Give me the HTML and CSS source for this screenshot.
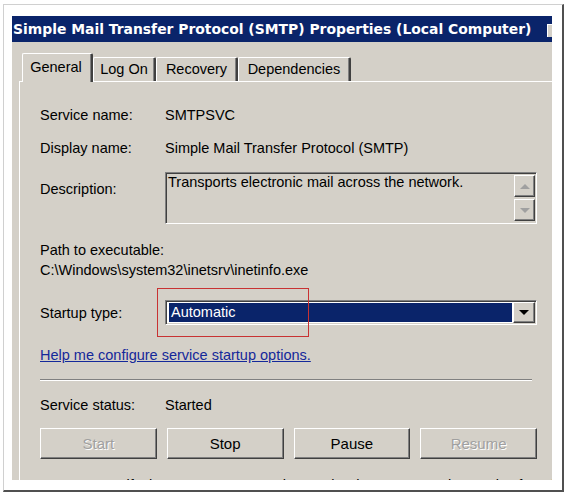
FILE: index.html
```html
<!DOCTYPE html>
<html>
<head>
<meta charset="utf-8">
<link rel="stylesheet" href="styles.css">
</head>
<body>
<div class="frame">
  <div class="dialog">
    <div class="titlebar">
      <span class="title">Simple Mail Transfer Protocol (SMTP) Properties (Local Computer)</span>
      <span class="closefrag"></span>
    </div>
    <div class="tabs">
      <div class="tab sel">General</div>
      <div class="tab t-logon">Log On</div>
      <div class="tab t-rec">Recovery</div>
      <div class="tab t-dep">Dependencies</div>
    </div>
    <div class="panel">
      <div class="row r-svc"><span class="lbl">Service name:</span><span>SMTPSVC</span></div>
      <div class="row r-disp"><span class="lbl">Display name:</span><span>Simple Mail Transfer Protocol (SMTP)</span></div>
      <div class="row r-desc">
        <span class="lbl desc-lbl">Description:</span>
        <div class="descbox">
          <div class="desctext">Transports electronic mail across the network.</div>
          <div class="vscroll">
            <div class="sbtn"><span class="tri up"></span></div>
            <div class="sbtn"><span class="tri down"></span></div>
          </div>
        </div>
      </div>
      <div class="path-lbl">Path to executable:</div>
      <div class="path">C:\Windows\system32\inetsrv\inetinfo.exe</div>
      <div class="row r-start">
        <span class="lbl">Startup type:</span>
        <div class="combo">
          <div class="combosel">Automatic</div>
          <div class="combobtn"><span class="tri down black"></span></div>
        </div>
        <div class="redbox"></div>
      </div>
      <a class="link" href="#">Help me configure service startup options.</a>
      <div class="sep"></div>
      <div class="row r-status"><span class="lbl">Service status:</span><span>Started</span></div>
      <div class="buttons">
        <div class="btn dis">Start</div>
        <div class="btn">Stop</div>
        <div class="btn">Pause</div>
        <div class="btn dis">Resume</div>
      </div>
      <div class="cut">You can specify the start parameters that apply when you start the service from here.</div>
    </div>
  </div>
</div>
</body>
</html>
```

FILE: styles.css
```css
html, body {
  margin: 0;
  padding: 0;
  background: #ffffff;
}
body {
  width: 565px;
  height: 493px;
  overflow: hidden;
}
.frame {
  margin: 4px 0 0 3px;
  box-sizing: border-box;
  width: 561px;
  height: 488px;
  border-top: 1px solid #d0d0d0;
  border-left: 1px solid #d0d0d0;
  border-right: 2px solid #505050;
  border-bottom: 2px solid #505050;
  padding: 11px 10px 10px 8px;
}
.dialog {
  width: 540px;
  height: 464px;
  background: #d4d0c8;
  overflow: hidden;
  display: flex;
  flex-direction: column;
  font-family: "Liberation Sans", Arial, sans-serif;
  font-size: 14.5px;
  color: #000;
  position: relative;
}
.titlebar {
  height: 26px;
  background: #0a246a;
  color: #fff;
  display: flex;
  align-items: center;
  flex-shrink: 0;
  overflow: hidden;
}
.title {
  font-family: "DejaVu Sans", Verdana, sans-serif;
  font-weight: bold;
  font-size: 13.9px;
  white-space: nowrap;
  padding-left: 1px;
}
.closefrag {
  margin-left: auto;
  flex-shrink: 0;
  width: 4px;
  height: 12px;
  background: #d4d0c8;
  border-top: 1px solid #fff;
  border-left: 1px solid #fff;
  margin-top: 2px;
}
.tabs {
  display: flex;
  align-items: flex-end;
  padding: 11px 0 0 10px;
  height: 28px;
  flex-shrink: 0;
  position: relative;
  z-index: 1;
}
.tab {
  box-sizing: border-box;
  height: 24px;
  border-top: 1px solid #fff;
  border-left: 1px solid #fff;
  border-right: 2px solid #404040;
  border-radius: 2px 2px 0 0;
  line-height: 22px;
  text-align: center;
  white-space: nowrap;
  box-shadow: inset -1px 0 0 #808080;
}
.tab.sel {
  height: 29px;
  width: 71px;
  margin-bottom: -1px;
  background: #d4d0c8;
  line-height: 26px;
  padding-right: 2px;
}
.t-logon { width: 63px; }
.t-rec { width: 82px; }
.t-dep { width: 113px; }
.panel {
  margin-left: 7px;
  border-left: 1px solid #fff;
  border-top: 1px solid #fff;
  padding: 24px 15px 0 20px;
  display: flex;
  flex-direction: column;
  flex: 1;
  min-height: 0;
  position: relative;
}
.row {
  display: grid;
  grid-template-columns: 125px 1fr;
  align-items: center;
  line-height: 18px;
  position: relative;
}
.r-disp { margin-top: 15px; }
.r-desc { margin-top: 15px; align-items: start; }
.desc-lbl { padding-top: 8px; }
.descbox {
  height: 52px;
  box-sizing: border-box;
  border-top: 1px solid #808080;
  border-left: 1px solid #808080;
  border-right: 1px solid #fff;
  border-bottom: 1px solid #fff;
  box-shadow: inset 1px 1px 0 #404040, inset -1px -1px 0 #d4d0c8;
  display: flex;
  padding: 1px 1px 1px 2px;
}
.desctext {
  flex: 1;
  line-height: 17px;
}
.vscroll {
  width: 21px;
  display: flex;
  flex-direction: column;
  gap: 2px;
  padding: 1px 0 1px;
}
.sbtn {
  flex: 1;
  box-sizing: border-box;
  background: #d4d0c8;
  border-top: 1px solid #fff;
  border-left: 1px solid #fff;
  border-right: 1px solid #404040;
  border-bottom: 1px solid #404040;
  box-shadow: inset -1px -1px 0 #808080;
  display: flex;
  align-items: center;
  justify-content: center;
}
.tri {
  width: 0;
  height: 0;
  border-left: 5px solid transparent;
  border-right: 5px solid transparent;
}
.tri.up { border-bottom: 5px solid #a0a0a0; }
.tri.down { border-top: 5px solid #a0a0a0; }
.tri.down.black { border-top-color: #000; }
.path-lbl {
  margin-top: 16px;
  line-height: 21px;
}
.path {
  line-height: 19px;
}
.r-start {
  margin-top: 20px;
}
.combo {
  height: 25px;
  box-sizing: border-box;
  background: #fff;
  border-top: 1px solid #808080;
  border-left: 1px solid #808080;
  border-right: 1px solid #fff;
  border-bottom: 1px solid #fff;
  box-shadow: inset 1px 1px 0 #404040, inset -1px -1px 0 #d4d0c8;
  display: flex;
  padding: 2px 2px 2px 3px;
}
.combosel {
  flex: 1;
  background: #0a246a;
  color: #fff;
  line-height: 19px;
  padding-left: 2px;
  margin-right: 1px;
}
.combobtn {
  width: 22px;
  box-sizing: border-box;
  background: #d4d0c8;
  border-top: 1px solid #fff;
  border-left: 1px solid #fff;
  border-right: 1px solid #404040;
  border-bottom: 1px solid #404040;
  box-shadow: inset -1px -1px 0 #808080;
  display: flex;
  align-items: center;
  justify-content: center;
  margin: -1px -1px -1px 0;
}
.redbox {
  position: absolute;
  left: 117px;
  top: -12px;
  width: 150px;
  height: 47px;
  border: 1px solid #c83232;
  pointer-events: none;
}
.link {
  margin-top: 21px;
  line-height: 18px;
  color: #14289a;
  text-decoration: underline;
  align-self: flex-start;
}
.sep {
  margin-top: 15px;
  height: 1px;
  border-top: 1px solid #808080;
  border-bottom: 1px solid #fff;
  margin-right: 5px;
}
.r-status { margin-top: 15px; }
.buttons {
  margin-top: 14px;
  display: grid;
  grid-template-columns: repeat(4, 1fr);
  column-gap: 10px;
}
.btn {
  height: 31px;
  box-sizing: border-box;
  border-top: 1px solid #fff;
  border-left: 1px solid #fff;
  border-right: 1px solid #404040;
  border-bottom: 1px solid #404040;
  box-shadow: inset -1px -1px 0 #808080;
  display: flex;
  align-items: center;
  justify-content: center;
  font-size: 15px;
}
.btn.dis {
  color: #a0a0a0;
  text-shadow: 1px 1px 0 #fff;
}
.cut {
  margin-top: 17px;
  line-height: 18px;
  white-space: nowrap;
  flex-shrink: 0;
}
```
